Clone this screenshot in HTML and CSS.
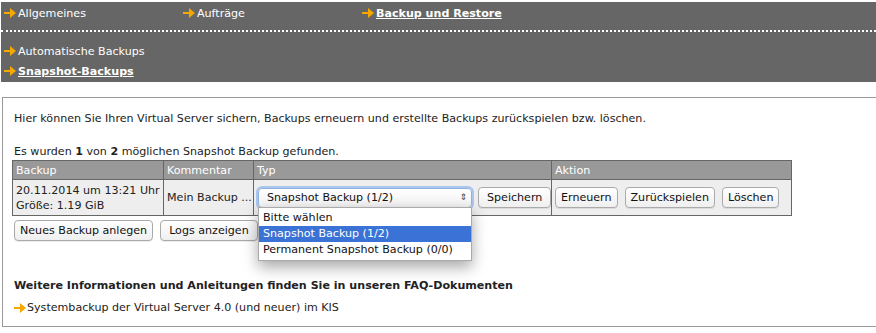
FILE: index.html
```html
<!DOCTYPE html>
<html lang="de">
<head>
  <meta charset="UTF-8" />
  <title>Backup und Restore</title>
  <link rel="stylesheet" href="styles.css">
</head>
<body>
  <div class="header">
    <div class="nav-top">
      <a class="nav-link" href="#"><svg class="arrow" viewBox="0 0 12 10"><path d="M0 4h6V0l6 5-6 5V6H0z"/></svg>Allgemeines</a>
      <a class="nav-link" href="#"><svg class="arrow" viewBox="0 0 12 10"><path d="M0 4h6V0l6 5-6 5V6H0z"/></svg>Aufträge</a>
      <a class="nav-link active" href="#"><svg class="arrow" viewBox="0 0 12 10"><path d="M0 4h6V0l6 5-6 5V6H0z"/></svg><span>Backup und Restore</span></a>
    </div>
    <div class="nav-sub">
      <a class="nav-link" href="#"><svg class="arrow" viewBox="0 0 12 10"><path d="M0 4h6V0l6 5-6 5V6H0z"/></svg>Automatische Backups</a>
      <a class="nav-link active" href="#"><svg class="arrow" viewBox="0 0 12 10"><path d="M0 4h6V0l6 5-6 5V6H0z"/></svg><span>Snapshot-Backups</span></a>
    </div>
  </div>

  <div class="content">
    <p class="intro">Hier können Sie Ihren Virtual Server sichern, Backups erneuern und erstellte Backups zurückspielen bzw. löschen.</p>
    <p class="count">Es wurden <b>1</b> von <b>2</b> möglichen Snapshot Backup gefunden.</p>

    <table class="backups">
      <thead>
        <tr>
          <th class="col-backup">Backup</th>
          <th class="col-comment">Kommentar</th>
          <th class="col-type">Typ</th>
          <th>Aktion</th>
        </tr>
      </thead>
      <tbody>
        <tr>
          <td>20.11.2014 um 13:21 Uhr<br>Größe: 1.19 GiB</td>
          <td>Mein Backup ...</td>
          <td>
            <div class="type-cell">
              <div class="select-wrap">
                <div class="fake-select">Snapshot Backup (1/2)<span class="updown">⇕</span></div>
                <ul class="dropdown">
                  <li>Bitte wählen</li>
                  <li class="selected">Snapshot Backup (1/2)</li>
                  <li>Permanent Snapshot Backup (0/0)</li>
                </ul>
              </div>
              <button class="btn">Speichern</button>
            </div>
          </td>
          <td>
            <div class="actions">
              <button class="btn btn-small">Erneuern</button>
              <button class="btn btn-small">Zurückspielen</button>
              <button class="btn btn-small">Löschen</button>
            </div>
          </td>
        </tr>
      </tbody>
    </table>

    <div class="table-buttons">
      <button class="btn btn-small">Neues Backup anlegen</button>
      <button class="btn">Logs anzeigen</button>
    </div>

    <h4 class="faq-title">Weitere Informationen und Anleitungen finden Sie in unseren FAQ-Dokumenten</h4>
    <a class="faq-link" href="#"><svg class="arrow" viewBox="0 0 12 10"><path d="M0 4h6V0l6 5-6 5V6H0z"/></svg>Systembackup der Virtual Server 4.0 (und neuer) im KIS</a>
  </div>
</body>
</html>
```

FILE: styles.css
```css
* {
  box-sizing: border-box;
  margin: 0;
  padding: 0;
}

body {
  font-family: 'DejaVu Sans', Verdana, sans-serif;
  font-size: 11.1px;
  color: #222;
  background: #fff;
  overflow: hidden;
}

.arrow {
  width: 12px;
  height: 10px;
  fill: #f5a800;
  margin-right: 2px;
  flex-shrink: 0;
}

/* Header navigation */
.header {
  margin: 2px 0 0 1px;
  height: 80px;
  background-color: #666;
}

.nav-link {
  display: flex;
  align-items: center;
  color: #fff;
  text-decoration: none;
  white-space: nowrap;
}

.nav-link.active span {
  font-weight: bold;
  text-decoration: underline;
}

.nav-top {
  display: flex;
  height: 30px;
  padding: 3px 0 0 3px;
  border-bottom: 2px dotted #fff;
}

.nav-top .nav-link {
  width: 179px;
  height: 16px;
}

.nav-sub {
  display: flex;
  flex-direction: column;
  padding: 11px 0 0 3px;
  gap: 4px;
}

.nav-sub .nav-link {
  height: 16px;
}

/* Content box */
.content {
  margin: 15px 0 0 2px;
  height: 230px;
  border: 1px solid #999;
  border-right: 0;
  padding: 13px 0 0 11px;
}

.intro {
  line-height: 16px;
}

.count {
  margin-top: 17px;
  line-height: 16px;
}

.backups {
  margin-left: -2px;
  width: 780px;
  table-layout: fixed;
  border-collapse: collapse;
  border: 1px solid #666;
}

.backups th {
  background-color: #999;
  color: #fff;
  font-weight: normal;
  text-align: left;
  height: 19px;
  padding: 0 3px;
  border: 1px solid #666;
}

.backups td {
  background-color: #eee;
  height: 36px;
  padding: 0 3px;
  line-height: 15px;
  white-space: nowrap;
  border: 1px solid #666;
}

.col-backup { width: 151px; }
.col-comment { width: 90px; }
.col-type { width: 298px; }

.type-cell,
.actions {
  display: flex;
  align-items: center;
  gap: 6px;
}

.actions {
  gap: 7px;
}

.select-wrap {
  position: relative;
  margin-left: 1px;
}

.fake-select {
  display: flex;
  align-items: center;
  justify-content: space-between;
  width: 214px;
  height: 20px;
  padding: 0 4px 0 8px;
  background: linear-gradient(#fff, #f2f2f2);
  border: 1px solid #8fb1e0;
  border-radius: 4px;
  box-shadow: 0 0 0 2px #a9c6ee;
  color: #111;
}

.updown {
  font-size: 9px;
  color: #444;
}

.dropdown {
  position: absolute;
  top: 19px;
  left: 0;
  width: 214px;
  list-style: none;
  background: #fff;
  border: 1px solid #aaa;
  padding: 2px 0;
  box-shadow: 0 6px 14px rgba(0, 0, 0, 0.35);
  z-index: 10;
}

.dropdown li {
  height: 16px;
  line-height: 16px;
  padding: 0 4px;
  white-space: nowrap;
  color: #111;
}

.dropdown li.selected {
  background-color: #3a72d6;
  color: #fff;
}

.btn {
  font-family: 'DejaVu Sans', Verdana, sans-serif;
  font-size: 11.1px;
  color: #111;
  height: 21px;
  padding: 0 8px;
  background: linear-gradient(#fff, #efefef);
  border: 1px solid #aaa;
  border-radius: 4px;
  box-shadow: 0 1px 0 rgba(0, 0, 0, 0.08);
  white-space: nowrap;
  cursor: pointer;
}

.btn-small {
  padding: 0 5px;
}

.table-buttons {
  display: flex;
  gap: 7px;
  margin-top: 4px;
}

.faq-title {
  margin-top: 37px;
  font-size: 11.1px;
  line-height: 16px;
}

.faq-link {
  display: flex;
  align-items: center;
  margin-top: 6px;
  color: #222;
  text-decoration: none;
  line-height: 16px;
}

.faq-link .arrow {
  margin-right: 1px;
}
```
